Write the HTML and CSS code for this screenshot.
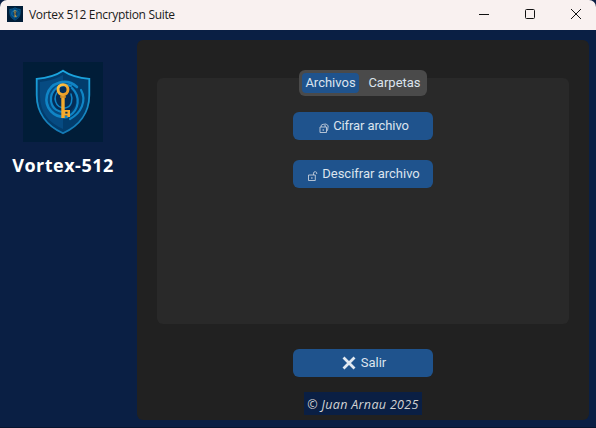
FILE: index.html
```html
<!DOCTYPE html>
<html lang="es">
<head>
<meta charset="utf-8">
<title>Vortex 512 Encryption Suite</title>
<link rel="stylesheet" href="styles.css">
</head>
<body>
<svg class="defs" width="0" height="0">
  <defs>
    <linearGradient id="gold" x1="0" y1="0" x2="1" y2="1"><stop offset="0" stop-color="#ffc64a"/><stop offset="1" stop-color="#e8961f"/></linearGradient>
    <linearGradient id="rim" x1="0" y1="0" x2="0" y2="1"><stop offset="0" stop-color="#1ba6e0"/><stop offset="1" stop-color="#1479b4"/></linearGradient>
  </defs>
  <symbol id="shield" viewBox="0 0 80 80">
    <rect width="80" height="80" fill="#011d38"/>
    <path d="M40 8.7Q30 15.5 13.7 16.8V33C13.7 51 24 64 40 71.2C56 64 66.3 51 66.3 33V16.8Q50 15.5 40 8.7Z" fill="#023c6c" stroke="url(#rim)" stroke-width="1.8"/>
    <path d="M40 13Q30 18.5 17 20V34C17 50 26 61 40 67Z" fill="#064b82"/>
    <circle cx="40" cy="38" r="13" fill="#042d57"/>
    <g fill="none" stroke="#1085c6" stroke-linecap="round">
      <path d="M54 25C43 15 27 21 24 33C21 46 31 56 44 55" stroke-width="2.6"/>
      <path d="M48 24C36 20 27 29 28 39C29 47 36 51 43 50" stroke-width="2.2"/>
      <path d="M36 28C29 35 32 46 42 46C49 45 50 37 48 32" stroke-width="1.5"/>
      <path d="M49 26C58 35 56 48 46 54" stroke-width="2.2"/>
      <path d="M58 28C64 39 58 51 47 57" stroke-width="2.2"/>
    </g>
    <circle cx="40" cy="27.6" r="5" fill="none" stroke="url(#gold)" stroke-width="2.9"/>
    <path d="M38.3 33.5h3.4V48h5.3v7h-2.6v-1.6h-2.7V56h-3.4Z" fill="#f5aa2d"/>
    <path d="M42.3 49.8h2.2v1.8h-2.2Z" fill="#073457"/>
    <path d="M37 34.2h6v1.5h-6Z" fill="#d18b25"/>
  </symbol>
</svg>
<header class="titlebar">
  <svg class="app-icon"><use href="#shield"/></svg>
  <span class="app-title">Vortex 512 Encryption Suite</span>
  <div class="controls">
    <svg viewBox="0 0 12 12"><path d="M1 6.5h10"/></svg>
    <svg viewBox="0 0 12 12"><rect x="1.5" y="1.5" width="9" height="9" rx="1"/></svg>
    <svg viewBox="0 0 12 12"><path d="M1 1l10 10M11 1L1 11"/></svg>
  </div>
</header>
<div class="window">
  <aside class="sidebar">
    <svg class="logo"><use href="#shield"/></svg>
    <h1>Vortex-512</h1>
  </aside>
  <main class="card">
    <nav class="tabs">
      <button class="tab active">Archivos</button>
      <button class="tab">Carpetas</button>
    </nav>
    <section class="panel">
      <button class="btn">
        <svg class="lock" viewBox="0 0 10 10"><path d="M1 4h6.5v5.5H1zM2.2 4V2.3Q4.2.1 6.2 2.3V4M4.2 6v2M5.5.9l1.7.3 2 1.5-.6 4.5-1 1"/></svg>
        <span class="encrypt">Cifrar archivo</span>
      </button>
      <button class="btn">
        <svg class="lock" viewBox="0 0 10 10"><path d="M.5 4h6.8v5.5H.5zM5.5 4V2.2Q5.6.6 7.3.7Q9 .8 8.8 3M3.9 6v2"/></svg>
        <span class="decrypt">Descifrar archivo</span>
      </button>
    </section>
    <button class="btn exit">
      <svg class="cross" viewBox="0 0 14 14"><path d="M1.5 1.5l11 11M12.5 1.5l-11 11"/></svg>
      <span>Salir</span>
    </button>
    <footer>© Juan Arnau 2025</footer>
  </main>
</div>
</body>
</html>
```
FILE: styles.css
```css
* { box-sizing: border-box; }
body {
  margin: 0;
  width: 596px;
  height: 428px;
  overflow: hidden;
  background: #0a1f44;
  font-family: Roboto, sans-serif;
}
.defs { display: block; }
button { border: 0; padding: 0; font: inherit; color: inherit; }
.titlebar {
  height: 30px;
  display: flex;
  align-items: center;
  padding: 0 14px 0 7px;
  background: #f9f1f0;
  border-radius: 7px 7px 0 0;
}
.app-icon { width: 16px; height: 16px; margin-top: -2px; }
.app-title {
  margin: -1px 0 0 6px;
  font: 12px "Open Sans", sans-serif;
  letter-spacing: -0.32px;
  color: #1a1a1a;
}
.controls { display: flex; gap: 34px; margin-left: auto; margin-top: -2px; }
.controls svg { width: 12px; height: 12px; fill: none; stroke: #111; stroke-width: 1; }
.window {
  height: 398px;
  display: flex;
  border-bottom: 1px solid #07152f;
}
.sidebar {
  width: 137px;
  padding: 32px 11px 0 0;
  display: flex;
  flex-direction: column;
  align-items: center;
}
.logo { width: 80px; height: 80px; }
h1 {
  margin: 10px 0 0;
  font: bold 18px/26px "Open Sans", sans-serif;
  letter-spacing: 0.5px;
  color: #fff;
  white-space: nowrap;
}
.card {
  width: 452px;
  height: 380px;
  margin-top: 10px;
  padding: 30px 20px 0;
  display: flex;
  flex-direction: column;
  align-items: center;
  border-radius: 6px;
  background: #212121;
}
.tabs {
  z-index: 1;
  display: flex;
  width: 128px;
  height: 26px;
  padding: 3px;
  margin-bottom: -18px;
  border-radius: 6px;
  background: #4a4a4a;
}
.tab {
  height: 20px;
  flex: 1;
  padding-left: 6px;
  border-radius: 4px;
  background: none;
  font-size: 13px;
  line-height: 20px;
  color: #dce4ee;
}
.tab.active { flex: 0 0 57px; padding: 0; background: #1f538d; }
.panel {
  width: 412px;
  height: 246px;
  padding-top: 34px;
  display: flex;
  flex-direction: column;
  align-items: center;
  gap: 20px;
  border-radius: 6px;
  background: #292929;
}
.btn {
  width: 140px;
  height: 28px;
  padding-left: 2px;
  display: flex;
  align-items: center;
  justify-content: center;
  gap: 4px;
  border-radius: 6px;
  background: #1f538d;
  color: #dce4ee;
  font-size: 13px;
  line-height: 20px;
}
.encrypt { letter-spacing: -0.1px; }
.lock {
  width: 10px;
  height: 10px;
  margin-top: 4px;
  fill: none;
  stroke: #c4cedb;
  stroke-width: 0.9;
}
.exit { margin-top: 25px; gap: 5px; }
.cross { width: 14px; height: 14px; fill: none; stroke: #e2e9f1; stroke-width: 2.8; }
footer {
  width: 118px;
  height: 23px;
  margin-top: 15px;
  background: #0a1f44;
  color: #d3d3d3;
  font: italic 12.5px/25px "Open Sans", sans-serif;
  letter-spacing: 0.33px;
  text-align: center;
  white-space: nowrap;
}
```
